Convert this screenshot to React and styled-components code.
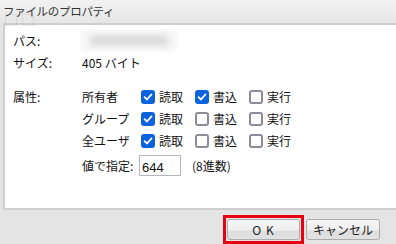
import React from 'react';
import styled, { createGlobalStyle } from 'styled-components';

const Global = createGlobalStyle`
  html, body { margin: 0; padding: 0; background: #e4e4e4; }
  body { font-family: 'Noto Sans CJK JP', 'Noto Sans', sans-serif; }
`;

const Window = styled.div`
  width: 396px;
  height: 244px;
  background: #e4e4e4;
  display: flex;
  flex-direction: column;
  overflow: hidden;
`;

const TitleBar = styled.div`
  position: relative;
  height: 23px;
  background: linear-gradient(#f2f2f2, #e6e6e6);
  display: flex;
  align-items: center;
  padding-left: 3px;
  font-size: 11.5px;
  color: #333;
  letter-spacing: -0.3px;
`;

const GhostIcon = styled.span`
  position: absolute;
  top: 14px;
  left: ${(p) => p.left}px;
  width: 10px;
  height: 10px;
  border: 1px solid #000;
  opacity: 0.07;
`;

const Title = styled.span`
  position: relative;
`;

const Panel = styled.div`
  margin-left: 3px;
  width: 384px;
  height: 181px;
  border: 2px solid #cfcfcf;
  background: #fff;
  padding: 5px 0 0 8px;
  box-sizing: content-box;
  display: flex;
  flex-direction: column;
`;

const Row = styled.div`
  display: grid;
  grid-template-columns: 69px auto;
  align-items: ${(p) => (p.top ? 'start' : 'center')};
  min-height: 22px;
  margin-top: ${(p) => p.gap || 0}px;
  font-size: 12px;
  color: #111;
`;

const Label = styled.span`
  line-height: 22px;
`;

const Blur = styled.div`
  width: 97px;
  height: 21px;
  display: flex;
  align-items: center;
  justify-content: center;
  margin-left: -2px;
  background: #f7f7f7;
  filter: blur(1.5px);
`;

const BlurCore = styled.div`
  width: 78px;
  height: 9px;
  background: #d6d6d6;
  filter: blur(3px);
`;

const AttrGrid = styled.div`
  display: grid;
  grid-template-columns: 59px repeat(3, 54px);
  grid-auto-rows: 22px;
  align-items: center;
`;

const Item = styled.label`
  display: flex;
  align-items: center;
  gap: 4px;
`;

const Box = styled.span`
  width: 14px;
  height: 14px;
  box-sizing: border-box;
  border-radius: 3px;
  border: ${(p) => (p.checked ? 'none' : '2px solid #8c8c99')};
  background: ${(p) => (p.checked ? '#0a62dc' : '#fff')};
  display: flex;
  align-items: center;
  justify-content: center;
`;

const SpecRow = styled.div`
  display: flex;
  align-items: center;
  margin-top: 3px;
`;

const SpecLabel = styled.span`
  width: 57px;
`;

const ValueInput = styled.div`
  width: 38px;
  height: 19px;
  border: 1px solid #b4b4c4;
  font-family: 'Liberation Sans', sans-serif;
  font-size: 13px;
  padding-left: 2px;
  line-height: 23px;
  overflow: hidden;
  box-sizing: content-box;
`;

const Hint = styled.span`
  margin-left: 11px;
`;

const Footer = styled.div`
  flex: 1;
  display: flex;
  justify-content: flex-end;
  align-items: flex-start;
  padding: 5px 16px 0 0;
`;

const Highlight = styled.div`
  border: 3px solid #e60012;
  padding: 1px;
  margin-right: 2px;
  display: flex;
`;

const Button = styled.button`
  width: ${(p) => p.w}px;
  height: 21px;
  margin-top: ${(p) => p.mt || 0}px;
  padding: 0;
  border: 1px solid #acacac;
  border-radius: 3px;
  background: linear-gradient(#f6f6f6 0%, #eeeeee 55%, #dddddd 56%, #e2e2e2 100%);
  font-family: 'Noto Sans CJK JP', sans-serif;
  font-size: 12px;
  color: #222;
  letter-spacing: ${(p) => p.ls || 0}px;
  line-height: 19px;
`;

const Check = () => (
  <svg width="10" height="10" viewBox="0 0 10 10">
    <path d="M1.6 5.2 L4 7.5 L8.5 2.4" fill="none" stroke="#fff" strokeWidth="1.8" strokeLinecap="round" strokeLinejoin="round" />
  </svg>
);

const Option = ({ checked, children }) => (
  <Item>
    <Box checked={checked}>{checked && <Check />}</Box>
    {children}
  </Item>
);

const perms = [
  { who: '所有者', flags: [true, true, false] },
  { who: 'グループ', flags: [true, false, false] },
  { who: '全ユーザ', flags: [true, false, false] },
];

const names = ['読取', '書込', '実行'];

export default function App() {
  return (
    <>
      <Global />
      <Window>
        <TitleBar>
          <GhostIcon left={5} />
          <GhostIcon left={22} />
          <Title>ファイルのプロパティ</Title>
        </TitleBar>
        <Panel>
          <Row>
            <Label>パス:</Label>
            <Blur>
              <BlurCore />
            </Blur>
          </Row>
          <Row>
            <Label>サイズ:</Label>
            <span>405 バイト</span>
          </Row>
          <Row top gap={12}>
            <Label>属性:</Label>
            <div>
              <AttrGrid>
                {perms.map((p) => (
                  <React.Fragment key={p.who}>
                    <span>{p.who}</span>
                    {p.flags.map((f, i) => (
                      <Option key={i} checked={f}>{names[i]}</Option>
                    ))}
                  </React.Fragment>
                ))}
              </AttrGrid>
              <SpecRow>
                <SpecLabel>値で指定:</SpecLabel>
                <ValueInput>644</ValueInput>
                <Hint>(8進数)</Hint>
              </SpecRow>
            </div>
          </Row>
        </Panel>
        <Footer>
          <Highlight>
            <Button w={73} ls={1}>O K</Button>
          </Highlight>
          <Button w={74} mt={4}>キャンセル</Button>
        </Footer>
      </Window>
    </>
  );
}
